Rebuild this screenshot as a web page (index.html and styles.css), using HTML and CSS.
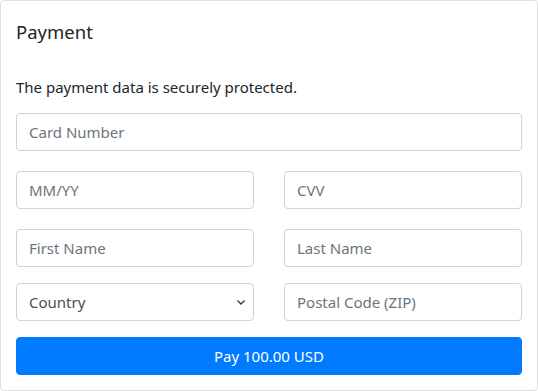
FILE: index.html
```html
<!DOCTYPE html>
<html lang="en">

  <head>
    <meta charset="UTF-8">
    <meta name="viewport" content="width=device-width, initial-scale=1.0">
    <title>Payment</title>
    <link rel="stylesheet" href="styles.css">
  </head>

  <body>
    <div class="card">
      <h5 class="card-title">Payment</h5>
      <p class="card-text">The payment data is securely protected.</p>

      <form class="pay-form">
        <input class="form-control" type="text" placeholder="Card Number">

        <div class="form-row gap-20">
          <input class="form-control" type="text" placeholder="MM/YY">
          <input class="form-control" type="text" placeholder="CVV">
        </div>

        <div class="form-row gap-20">
          <input class="form-control" type="text" placeholder="First Name">
          <input class="form-control" type="text" placeholder="Last Name">
        </div>

        <div class="form-row gap-16">
          <div class="select-wrap">
            <select class="form-control custom-select">
              <option>Country</option>
            </select>
            <svg class="chevron" width="10" height="8" viewBox="0 0 10 8">
              <path d="M1.5 2.5 L5 6 L8.5 2.5" fill="none" stroke="#343a40" stroke-width="1.4"/>
            </svg>
          </div>
          <input class="form-control" type="text" placeholder="Postal Code (ZIP)">
        </div>

        <button class="btn-pay" type="button">Pay 100.00 USD</button>
      </form>
    </div>
  </body>

</html>
```

FILE: styles.css
```css
body {
  margin: 0;
  font-family: "Noto Sans", "Open Sans", Arial, sans-serif;
  color: #212529;
  background-color: #fff;
}

.card {
  box-sizing: border-box;
  width: 538px;
  height: 391px;
  border: 1px solid rgba(0, 0, 0, 0.125);
  border-radius: 4px;
  padding: 15px;
}

.card-title {
  margin: 4px 0 0 0;
  font-size: 18.5px;
  font-weight: 400;
  line-height: 24px;
}

.card-text {
  margin: 33px 0 0 0;
  font-size: 15px;
  line-height: 20px;
}

.pay-form {
  margin-top: 16px;
}

.form-control {
  box-sizing: border-box;
  display: block;
  width: 100%;
  height: 38px;
  padding: 6px 12px;
  font-family: inherit;
  font-size: 15px;
  color: #495057;
  background-color: #fff;
  border: 1px solid #ced4da;
  border-radius: 4px;
  outline: none;
}

.form-control::placeholder {
  color: #6c757d;
}

.form-row {
  display: grid;
  grid-template-columns: 1fr 1fr;
  column-gap: 30px;
}

.gap-20 {
  margin-top: 20px;
}

.gap-16 {
  margin-top: 16px;
}

.select-wrap {
  position: relative;
}

.custom-select {
  appearance: none;
  -webkit-appearance: none;
  color: #495057;
}

.chevron {
  position: absolute;
  right: 8px;
  top: 15px;
}

.btn-pay {
  display: block;
  width: 100%;
  height: 38px;
  margin-top: 16px;
  font-family: inherit;
  font-size: 15px;
  color: #fff;
  background-color: #007bff;
  border: 1px solid #007bff;
  border-radius: 4px;
  cursor: pointer;
}
```
